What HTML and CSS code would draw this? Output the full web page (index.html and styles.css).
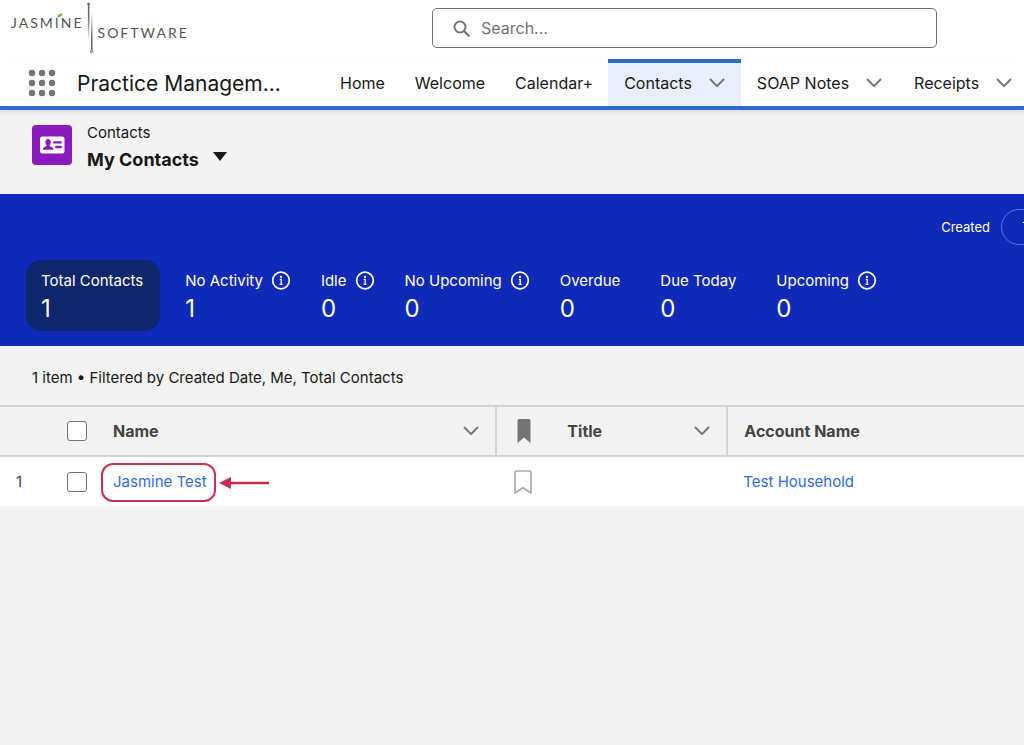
FILE: index.html
```html
<!DOCTYPE html>
<html lang="en">
<head>
<meta charset="utf-8">
<meta name="viewport" content="width=device-width, initial-scale=1">
<title>My Contacts | Practice Management</title>
<link rel="stylesheet" href="styles.css">
</head>
<body>
<svg class="sprite" aria-hidden="true">
  <symbol id="chevron" viewBox="0 0 16 10"><path d="M1.500 1.500 8 8.200l6.500-6.700" fill="none" stroke="currentColor" stroke-width="1.900" stroke-linecap="round" stroke-linejoin="round"/></symbol>
  <symbol id="info" viewBox="0 0 20 20"><circle cx="10" cy="9.500" r="8.300" fill="none" stroke="currentColor" stroke-width="1.700"/><circle cx="10" cy="5.800" r="1.150" fill="currentColor"/><path d="M8.700 8.400h1.500v4.800M8.500 13.400h3.200" fill="none" stroke="currentColor" stroke-width="1.300"/></symbol>
</svg>
<header class="top">
  <a class="logo" href="#" aria-label="Jasmine Software">
    <span class="logo-first">JASMINE</span>
    <svg class="logo-rule" viewBox="0 0 12 52" aria-hidden="true">
      <defs>
        <linearGradient id="fade-a" x1="0" y1="0" x2="0" y2="1"><stop offset="0.300" stop-color="#666"/><stop offset="1" stop-color="#666" stop-opacity="0"/></linearGradient>
        <linearGradient id="fade-b" x1="0" y1="0" x2="0" y2="1"><stop offset="0" stop-color="#666" stop-opacity="0"/><stop offset="0.700" stop-color="#666"/></linearGradient>
      </defs>
      <rect x="3.900" y="3" width="1.500" height="37" fill="url(#fade-a)"/>
      <rect x="7" y="10" width="1.500" height="38" fill="url(#fade-b)"/>
      <circle cx="4.600" cy="2" r="1.500" fill="#777"/>
      <circle cx="7.700" cy="49.500" r="1.300" fill="#bbb" stroke="#777" stroke-width="0.800"/>
    </svg>
    <span class="logo-second">SOFTWARE</span>
    <svg class="leaf" viewBox="0 0 6 5" aria-hidden="true"><path d="M0.500 4.500C0.500 1.500 2.500 0.300 5.500 0.500 5 3 3.500 4.300 0.500 4.500z" fill="#6cb33f"/></svg>
  </a>
  <label class="search">
    <svg viewBox="0 0 18 18" aria-hidden="true"><circle cx="7" cy="8" r="5.500" fill="none" stroke="#747474" stroke-width="2"/><path d="m11.200 12.200 4.500 4.500" stroke="#747474" stroke-width="2.200" stroke-linecap="round"/></svg>
    <input type="search" placeholder="Search..." aria-label="Search">
  </label>
</header>
<nav class="nav" aria-label="App navigation">
  <button class="launcher" type="button" aria-label="App Launcher">
    <svg viewBox="0 0 28 28" fill="#747474"><circle cx="4" cy="4" r="3.200"/><circle cx="14" cy="4" r="3.200"/><circle cx="24" cy="4" r="3.200"/><circle cx="4" cy="14" r="3.200"/><circle cx="14" cy="14" r="3.200"/><circle cx="24" cy="14" r="3.200"/><circle cx="4" cy="24" r="3.200"/><circle cx="14" cy="24" r="3.200"/><circle cx="24" cy="24" r="3.200"/></svg>
  </button>
  <span class="app-name">Practice Managem...</span>
  <div class="tabs">
    <a class="tab" href="#">Home</a>
    <a class="tab" href="#">Welcome</a>
    <a class="tab" href="#">Calendar+</a>
    <a class="tab has-menu active" href="#" aria-current="page">Contacts <svg class="chevron"><use href="#chevron"/></svg></a>
    <a class="tab has-menu" href="#">SOAP Notes <svg class="chevron"><use href="#chevron"/></svg></a>
    <a class="tab has-menu" href="#">Receipts <svg class="chevron"><use href="#chevron"/></svg></a>
  </div>
</nav>
<main>
  <section class="page-head">
    <svg class="object-icon" viewBox="0 0 40 40" aria-hidden="true">
      <rect width="40" height="40" rx="4" fill="#8a1bbf"/>
      <rect x="8" y="11.500" width="24.500" height="17" rx="2.500" fill="#fff"/>
      <path d="M16 14c1.700 0 2.800 1.300 2.800 3 0 1.200-.5 2.300-1.200 3v1.100l2.900 1.300c.5.300.8.700.8 1.300v1.100H11v-1.100c0-.6.300-1 .8-1.300l2.800-1.300V20c-.7-.7-1.200-1.800-1.200-3 0-1.700 1-3 2.600-3z" fill="#8a1bbf"/>
      <path d="M22.200 17.400h6.500M24.200 22h4.500" stroke="#8a1bbf" stroke-width="2.400" stroke-linecap="round"/>
    </svg>
    <div>
      <p class="object-name">Contacts</p>
      <h1 class="view-name">My Contacts
        <button class="view-switch" type="button" aria-label="Select a list view"><svg viewBox="0 0 14 9"><path d="M0 0h14L7 9z" fill="#181818"/></svg></button>
      </h1>
    </div>
  </section>
  <section class="metrics">
    <div class="filter"><span>Created</span><button class="pill" type="button">T</button></div>
    <div class="cards">
      <button class="card selected" type="button"><span class="card-label">Total Contacts</span><span class="count">1</span></button>
      <button class="card has-info" type="button"><span class="card-label">No Activity <svg class="info"><use href="#info"/></svg></span><span class="count">1</span></button>
      <button class="card has-info" type="button"><span class="card-label">Idle <svg class="info"><use href="#info"/></svg></span><span class="count">0</span></button>
      <button class="card has-info" type="button"><span class="card-label">No Upcoming <svg class="info"><use href="#info"/></svg></span><span class="count">0</span></button>
      <button class="card" type="button"><span class="card-label">Overdue</span><span class="count">0</span></button>
      <button class="card" type="button"><span class="card-label">Due Today</span><span class="count">0</span></button>
      <button class="card has-info" type="button"><span class="card-label">Upcoming <svg class="info"><use href="#info"/></svg></span><span class="count">0</span></button>
    </div>
  </section>
  <p class="summary">1 item • Filtered by Created Date, Me, Total Contacts</p>
  <table class="grid">
    <colgroup><col class="col-number"><col class="col-check"><col class="col-name"><col class="col-mark"><col class="col-title"><col></colgroup>
    <thead>
      <tr>
        <th></th>
        <th class="check"><input type="checkbox" aria-label="Select all"></th>
        <th class="divided"><div class="head">Name <svg class="chevron"><use href="#chevron"/></svg></div></th>
        <th class="mark"><svg class="bookmark" viewBox="0 0 18 24"><path d="M4 0h10q1.500 0 1.500 1.500V24L9 18.500 2.500 24V1.500Q2.500 0 4 0z" fill="#747474"/></svg></th>
        <th class="divided"><div class="head">Title <svg class="chevron"><use href="#chevron"/></svg></div></th>
        <th><div class="head">Account Name</div></th>
      </tr>
    </thead>
    <tbody>
      <tr>
        <td class="number">1</td>
        <td class="check"><input type="checkbox" aria-label="Select Jasmine Test"></td>
        <td><div class="marked"><a href="#">Jasmine Test</a>
          <svg class="arrow" viewBox="0 0 50 12" aria-hidden="true"><path d="M10 6h40" stroke="#c9304f" stroke-width="2.400"/><path d="M0 6 12 0v12z" fill="#c9304f"/></svg></div></td>
        <td class="mark"><svg class="bookmark" viewBox="0 0 18 24"><path d="M3 1h12q2 0 2 2v20l-8-5.300L1 23V3q0-2 2-2z" fill="none" stroke="#aeaeae" stroke-width="1.700" stroke-linejoin="round"/></svg></td>
        <td></td>
        <td><a href="#">Test Household</a></td>
      </tr>
    </tbody>
  </table>
</main>
</body>
</html>
```
FILE: styles.css
```css
* { box-sizing: border-box; }
body { margin: 0; background: #f3f3f3; color: #181818; font: 15px/20px Inter, "Liberation Sans", sans-serif; overflow-x: hidden; }
p, h1 { margin: 0; }
button { font: inherit; color: inherit; border: 0; padding: 0; background: none; }
a { color: #2f6bf0; text-decoration: none; }
svg { flex: none; }
.sprite { position: absolute; width: 0; height: 0; }
.chevron { width: 16px; height: 10px; color: #747474; }

.top { display: grid; grid-template-columns: 420px minmax(0, 505px); column-gap: 12px; height: 59px; background: #fff; }
.logo { position: relative; display: flex; padding: 2px 0 0 11px; font: 14px/20px Lato, sans-serif; color: #555; letter-spacing: 2px; }
.logo-first { margin-top: 11px; }
.logo-second { margin: 21px 0 0 2px; }
.logo-rule { width: 12px; height: 52px; }
.leaf { position: absolute; left: 57px; top: 13px; width: 6px; height: 5px; }
.search { display: flex; align-items: center; gap: 10px; height: 40px; margin-top: 8px; padding: 0 20px; border: 1px solid #747474; border-radius: 5px; }
.search svg { width: 18px; height: 18px; }
.search input { flex: 1; min-width: 0; border: 0; padding: 0; outline: 0; background: none; font: 16px/24px Inter, sans-serif; }
.search input::placeholder { color: #747474; opacity: 1; }

.nav { display: flex; align-items: stretch; height: 51px; padding-left: 28px; background: #fff; border-bottom: 4px solid #2e6bcd; box-shadow: 0 2px 4px #0000001a; }
.launcher { display: flex; flex: none; align-items: center; }
.launcher svg { width: 28px; height: 28px; }
.app-name { flex: none; width: 269px; padding-left: 21px; font-size: 21px; line-height: 50px; white-space: nowrap; }
.tabs { display: flex; }
.tab { display: flex; align-items: center; gap: 17px; padding: 4px 15px; font-size: 16px; line-height: 24px; color: #181818; white-space: nowrap; }
.has-menu { padding: 4px 16px; }
.active { background: #e8effa; box-shadow: inset 0 4px #2e6bcd; }

.page-head { display: flex; gap: 15px; height: 84px; padding: 13px 32px 0; }
.object-icon { width: 40px; height: 40px; margin-top: 2px; }
.object-name { font-size: 15px; line-height: 20px; }
.view-name { display: flex; align-items: center; gap: 14px; font-size: 18px; line-height: 34px; }
.view-switch { display: flex; padding-bottom: 8px; }
.view-switch svg { width: 14px; height: 9px; }

.metrics { padding: 15px 26px 15px; background: #0f29b8; color: #fff; overflow: hidden; }
.filter { display: flex; justify-content: flex-end; align-items: center; gap: 11px; margin-right: -112px; font-size: 13px; }
.pill { width: 109px; height: 36px; padding-left: 20px; text-align: left; border: 1px solid #4c7df0; border-radius: 18px; }
.cards { display: flex; gap: 10px; margin-top: 15px; }
.card { display: flex; flex-direction: column; height: 71px; padding: 11px 15px 8px; border-radius: 15px; text-align: left; white-space: nowrap; }
.has-info { padding-right: 5px; }
.selected { padding-right: 17px; background: #0d266c; }
.card-label { display: flex; align-items: center; gap: 8px; }
.info { width: 20px; height: 20px; }
.count { font-size: 24px; line-height: 36px; }

.summary { padding: 22px 32px 17px; }
.grid { width: 100%; table-layout: fixed; border-collapse: collapse; }
.col-number { width: 53px; }
.col-check { width: 44px; }
.col-name { width: 39%; }
.col-mark { width: 55px; }
.col-title { width: 176px; }
th, td { height: 50px; padding: 0 16px; text-align: left; }
th { font-size: 16px; color: #444; }
thead tr { border-top: 2px solid #d4d4d4; border-bottom: 2px solid #d4d4d4; }
.divided { border-right: 2px solid #d4d4d4; }
.head { display: flex; align-items: center; justify-content: space-between; }
tbody { background: #fff; }
.check { padding: 0 10px 0 14px; }
.number { color: #444; }
input[type="checkbox"] { display: block; appearance: none; width: 20px; height: 20px; margin: 0; border: 1px solid #747474; border-radius: 3px; background: #fff; }
.mark { padding: 0 18px; }
.bookmark { display: block; width: 18px; height: 24px; }
.marked { position: relative; width: max-content; }
.marked::before { content: ""; position: absolute; inset: -9px -9px -10px -12px; border: 2px solid #c9304f; border-radius: 12px; pointer-events: none; }
.arrow { position: absolute; left: calc(100% + 12px); top: 5px; width: 50px; height: 12px; }
```
